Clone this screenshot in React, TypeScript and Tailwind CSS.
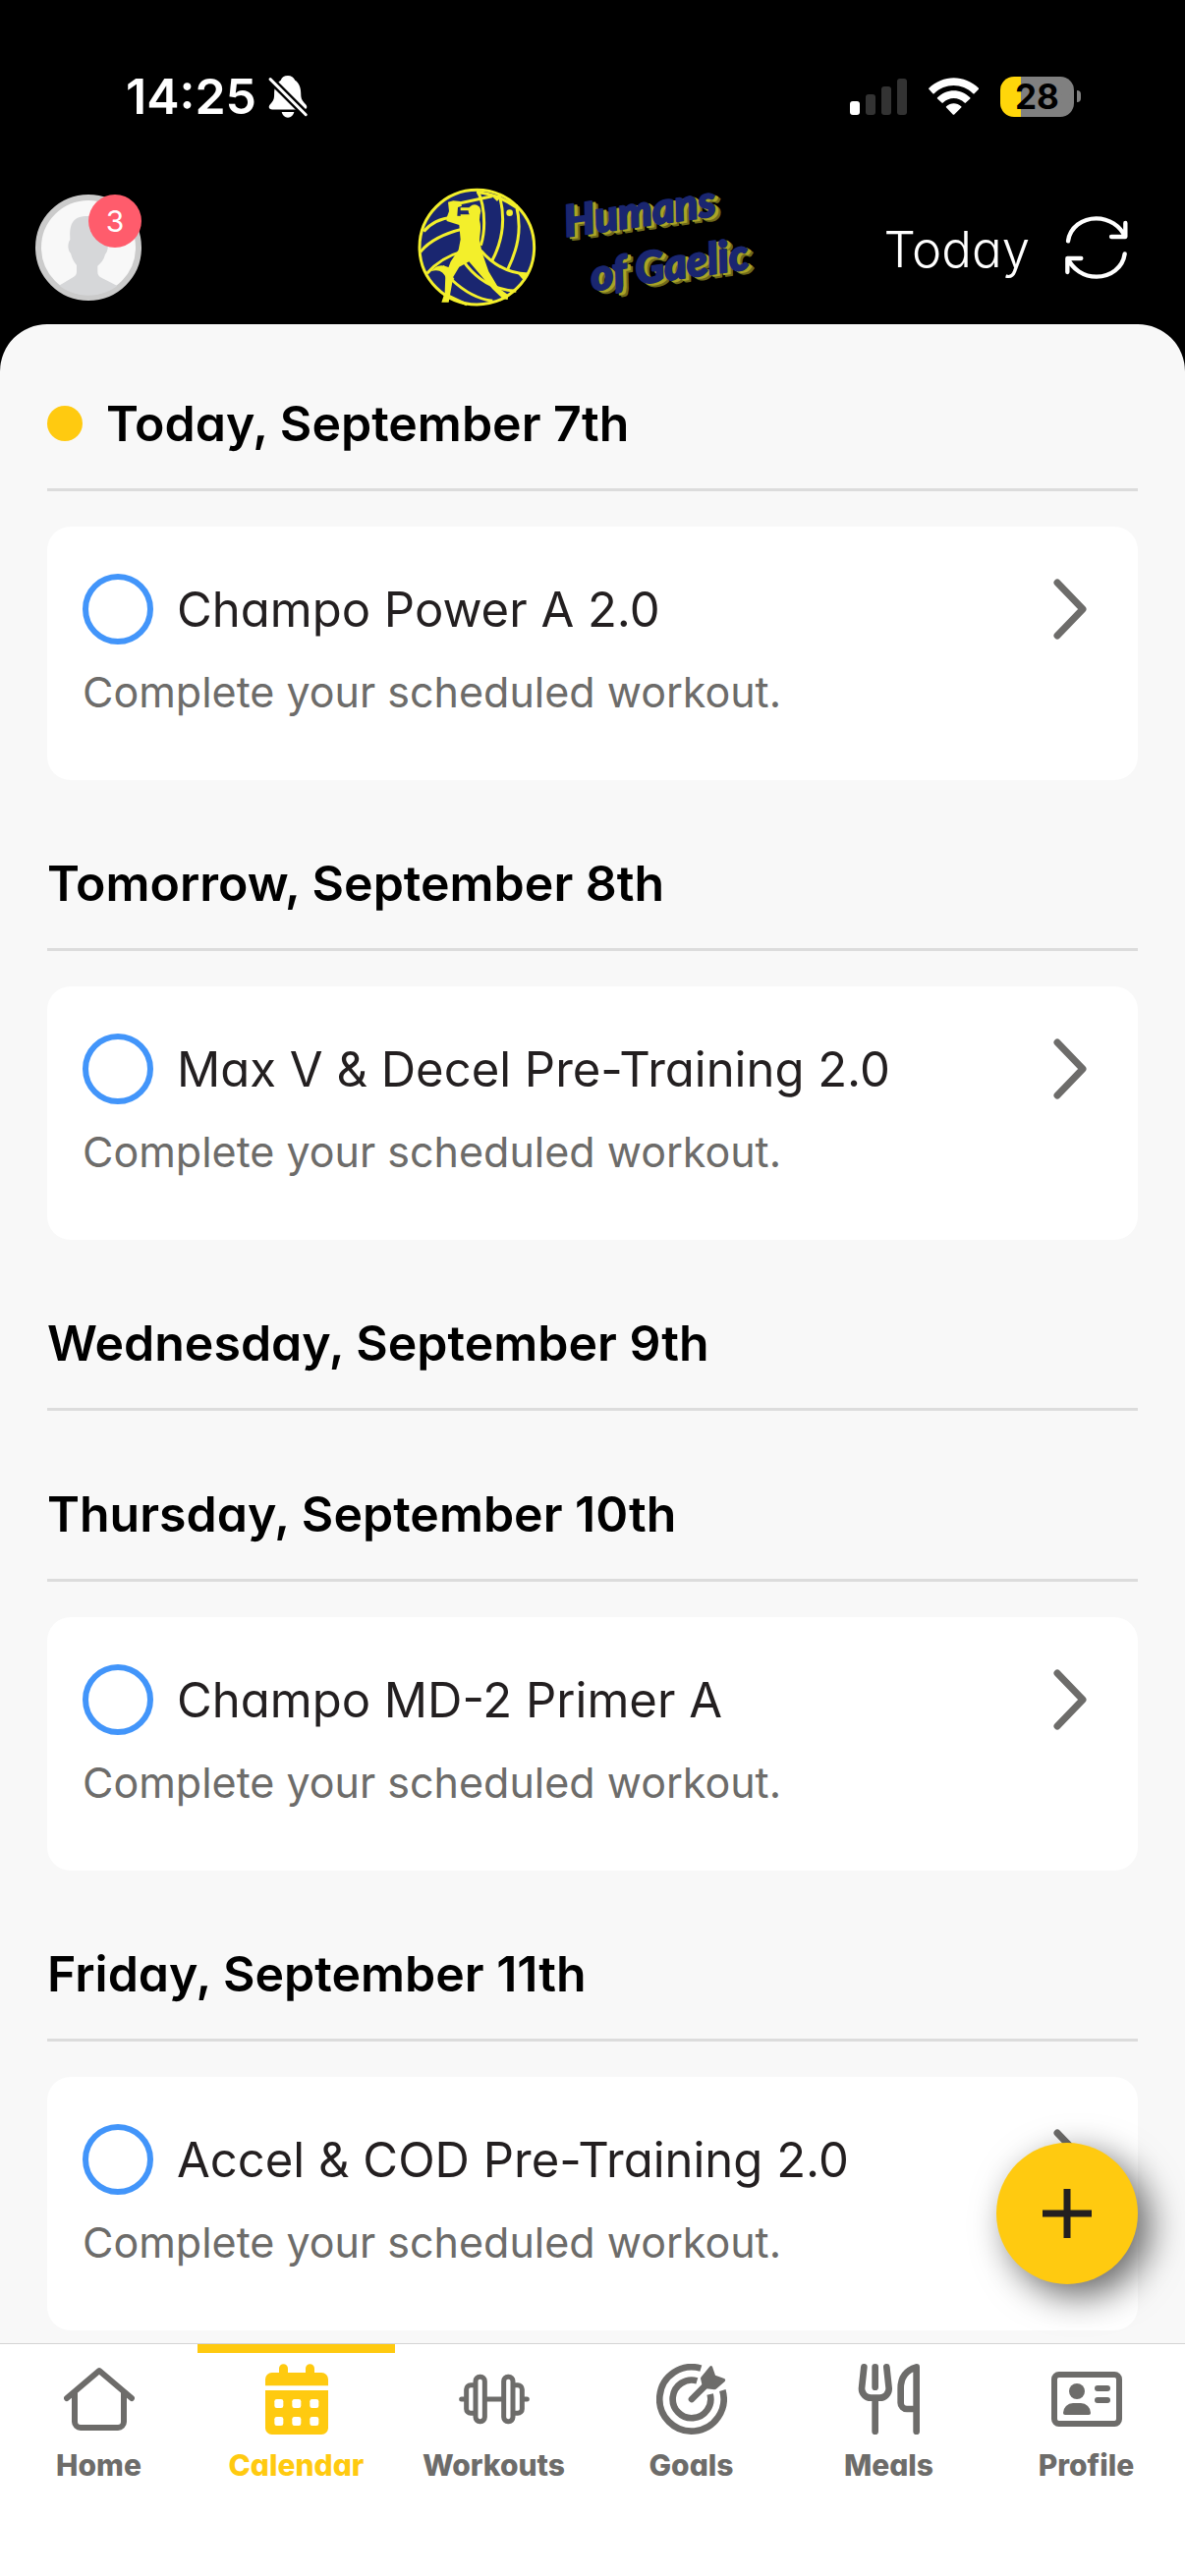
import { useState } from "react"
import type { ReactNode } from "react"

type Day = {
  label: string
  today?: boolean
  workout?: string
}

const days: Day[] = [
  { label: "Today, September 7th", today: true, workout: "Champo Power A 2.0" },
  { label: "Tomorrow, September 8th", workout: "Max V & Decel Pre-Training 2.0" },
  { label: "Wednesday, September 9th" },
  { label: "Thursday, September 10th", workout: "Champo MD-2 Primer A" },
  { label: "Friday, September 11th", workout: "Accel & COD Pre-Training 2.0" },
]

function StatusBar() {
  return (
    <div className="flex h-[60px] items-center justify-between pl-32 pr-[106px] text-white">
      <div className="flex items-center gap-3">
        <span className="text-[50px] leading-[60px] font-semibold">14:25</span>
        <svg viewBox="820 110 120 130" className="h-[43px] w-10" aria-hidden="true">
          <path
            fill="currentColor"
            d="M880 110c-12 0-19 6-22 14-15 10-20 24-20 41 0 17-2 21-12 33-8 9-4 16 6 16h96c10 0 14-7 6-16-10-12-14-16-14-33 0-17-5-33-18-41-4-8-12-14-22-14Z"
          />
          <path fill="currentColor" d="M861 222h38c-2 10-10 17-19 17s-17-7-19-17Z" />
          <path d="M820 115 942 237" stroke="#000" strokeWidth="23" />
          <path d="M826 121 935 230" stroke="currentColor" strokeWidth="9" strokeLinecap="round" />
        </svg>
      </div>

      <div className="flex items-center gap-[22px]">
        <svg viewBox="0 0 58 37" className="h-[37px] w-[58px]" aria-hidden="true">
          <rect x="0" y="23" width="10" height="14" rx="3" fill="#fff" />
          <rect x="16" y="16" width="10" height="21" rx="3" fill="#333" />
          <rect x="32" y="8" width="10" height="29" rx="3" fill="#333" />
          <rect x="48" y="0" width="10" height="37" rx="3" fill="#333" />
        </svg>
        <svg viewBox="417 116 152 113" className="h-[38px] w-[51px]" fill="currentColor" aria-hidden="true">
          <path d="M418 148c42-42 109-42 151 0 1 1 1 2 0 3l-13 13q-2 2-4 0c-33-32-85-32-118 0q-2 2-4 0l-12-13q-2-2 0-3Z" />
          <path d="M444 176c28-28 71-28 99 0q2 2 0 4l-13 12q-2 2-4 0c-18-18-47-18-65 0q-2 2-4 0l-13-12q-2-2 0-4Z" />
          <path d="M471 203c13-12 32-12 45 0q2 2 0 4l-20 20q-3 3-6 0l-19-20q-2-2 0-4Z" />
        </svg>
        <div className="flex items-center gap-[3px]">
          <div className="flex h-[41px] w-[75px] items-center justify-center rounded-[14px] bg-linear-to-r from-[#ffd60a] from-28% to-[#808080] to-28% text-[35px] leading-[41px] font-bold text-black">
            28
          </div>
          <div className="h-3 w-1 rounded-r-full bg-[#808080]" />
        </div>
      </div>
    </div>
  )
}

function Logo() {
  return (
    <svg viewBox="0 -16 356 156" className="h-[156px] w-[356px]" role="img" aria-label="Humans of Gaelic">
      {/* Ball with the hurler on top */}
      <g transform="translate(-25 -21) scale(.3333)">
        <circle cx="256" cy="248" r="175" fill="#1a2670" stroke="#f3ef2b" strokeWidth="9" />
        <g fill="none" stroke="#f3ef2b" strokeWidth="9">
          <path d="M94 200q30-38 90-44M84 262q38-48 130-70M104 328q40-48 110-68" />
          <path d="M206 131h34M206 152h34M258 76c16 30 20 60 20 98s-4 50-10 68" />
          <path d="M326 94c18 70 8 136-24 196M376 118c20 80 2 140-26 198" />
          <path d="M180 348q60 56 124 64M216 292q60 84 160 90M268 258q60 70 144 72" />
          <path d="M152 306q10 14 32 42M166 395l60 28M256 80q60 4 120 46M202 114l100-22" />
        </g>
        <path d="M116 322q18-24 44-16l18 6-14 34q-14-36-48-24M300 90l34-2-16 20ZM382 330l30 0-14 18Z" fill="#f3ef2b" />
        <circle cx="356" cy="143" r="10" fill="#f3ef2b" />
        <circle cx="249" cy="137" r="19" fill="#f3ef2b" />
        <path
          fill="#f3ef2b"
          d="m163 160 8-22-3-28 16-4 22 2 4 14-12 4-2 26 34 2 8-12 28 2-2 20c6 20 2 40 0 62l8 38 20 58 30 50 30 22-2 14-14-2-32-30-72-84-30 16-18 30-14 78h-22l10-30 2-52 16-42 24-36 6-32-4-44-38-12Z"
        />
      </g>
      <g
        fontFamily="Lato, sans-serif"
        fontWeight="900"
        fontStyle="italic"
        fontSize="44"
        strokeWidth="2"
        strokeLinejoin="round"
      >
        <g transform="translate(151 51) rotate(-8)">
          <text x="5" y="4" fill="#6e6b1c" stroke="#6e6b1c">Humans</text>
          <text x="3" y="2" fill="#a9a427" stroke="#a9a427">Humans</text>
          <text fill="#1a2670" stroke="#1a2670">Humans</text>
        </g>
        <g transform="translate(178 106) rotate(-8)">
          <text x="5" y="4" fill="#6e6b1c" stroke="#6e6b1c">of Gaelic</text>
          <text x="3" y="2" fill="#a9a427" stroke="#a9a427">of Gaelic</text>
          <text fill="#1a2670" stroke="#1a2670">of Gaelic</text>
        </g>
      </g>
    </svg>
  )
}

function Header() {
  return (
    <div className="grid grid-cols-[1fr_auto_1fr] items-center px-9 pt-[46px]">
      <button type="button" aria-label="Account, 3 notifications" className="relative size-[108px]">
        <svg viewBox="108 474 324 324" className="size-full" aria-hidden="true">
          <clipPath id="avatar">
            <circle cx="270" cy="636" r="146" />
          </clipPath>
          <circle cx="270" cy="636" r="153" fill="#f8f8f8" stroke="#cbcbcb" strokeWidth="18" />
          <path
            clipPath="url(#avatar)"
            fill="#d6d7d9"
            d="M214 612c-2-44 4-72 54-72s58 28 54 72c10 10 10 32-1 45-4 16-12 26-23 35v18q0 12 12 18l66 34v40H164v-40l60-36q10-6 10-16v-20c-10-12-14-22-18-36-10-10-10-32-2-42Z"
          />
        </svg>
        <span className="absolute top-0 right-0 flex size-[54px] items-center justify-center rounded-full bg-[#ff5c6c] text-[30px] leading-9 text-white">
          3
        </span>
      </button>
      <Logo />
      <div className="flex items-center justify-end gap-9 pr-[22px] text-white">
        <button type="button" className="pt-1 text-[51px] leading-[66px] font-light">Today</button>
        <button type="button" aria-label="Refresh">
          <svg
            viewBox="836 540 190 192"
            className="size-16"
            fill="none"
            stroke="currentColor"
            strokeWidth="13"
            strokeLinecap="round"
            strokeLinejoin="round"
            aria-hidden="true"
          >
            <path d="M844 616c6-42 44-69 86-69 40 0 73 23 88 56M1019 561v42h-43" />
            <path d="M1017 655c-6 43-44 70-86 70-40 0-73-23-88-56M842 711v-42h42" />
          </svg>
        </button>
      </div>
    </div>
  )
}

function WorkoutCard({ title }: { title: string }) {
  return (
    <article className="mt-9 rounded-3xl bg-white px-9 pt-12 pb-15">
      <div className="flex items-center">
        <label className="flex flex-1 items-center gap-6">
          <input
            type="checkbox"
            className="size-[72px] shrink-0 appearance-none rounded-full border-6 border-[#4295fa] checked:bg-[#4295fa]"
          />
          <span className="pt-0.5 text-[49px] leading-[66px] text-[#231f20]">{title}</span>
        </label>
        <button type="button" aria-label={`Open ${title}`} className="px-4">
          <svg
            viewBox="0 0 34 62"
            className="h-[62px] w-[34px]"
            fill="none"
            stroke="#6d6c6a"
            strokeWidth="7"
            strokeLinecap="round"
            strokeLinejoin="round"
            aria-hidden="true"
          >
            <path d="m4 4 26 27L4 58" />
          </svg>
        </button>
      </div>
      <p className="mt-[18px] text-[43px] leading-[60px] text-[#6d6c6a]">Complete your scheduled workout.</p>
    </article>
  )
}

const navItems: { label: string; icon: ReactNode; viewBox: string }[] = [
  {
    label: "Home",
    viewBox: "198 108 216 216",
    icon: (
      <path
        d="m207 213 99-84 99 84M231 196v89a18 18 0 0 0 18 18h114a18 18 0 0 0 18-18v-89"
        strokeWidth="18"
      />
    ),
  },
  {
    label: "Calendar",
    viewBox: "801 108 216 216",
    icon: (
      <g fill="currentColor" stroke="none">
        <path d="M855 135v-13a13 13 0 0 1 27 0v13h54v-13a13 13 0 0 1 27 0v13h22a20 20 0 0 1 20 20v20H813v-20a20 20 0 0 1 20-20Z" />
        <path d="M813 189h192v115a20 20 0 0 1-20 20H833a20 20 0 0 1-20-20Z" />
        <g fill="#fff">
          <rect x="841" y="216" width="27" height="27" rx="7" />
          <rect x="895" y="216" width="27" height="27" rx="7" />
          <rect x="949" y="216" width="27" height="27" rx="7" />
          <rect x="841" y="270" width="27" height="27" rx="7" />
          <rect x="895" y="270" width="27" height="27" rx="7" />
          <rect x="949" y="270" width="27" height="27" rx="7" />
        </g>
      </g>
    ),
  },
  {
    label: "Workouts",
    viewBox: "204 108 216 216",
    icon: (
      <g strokeWidth="15">
        <rect x="255" y="148" width="28" height="136" rx="13" />
        <rect x="341" y="148" width="28" height="136" rx="13" />
        <path d="M249 173h-9a13 13 0 0 0-13 13v60a13 13 0 0 0 13 13h9M375 173h9a13 13 0 0 1 13 13v60a13 13 0 0 1-13 13h-9" />
        <path d="M212 216h12M400 216h12M288 216h48" />
      </g>
    ),
  },
  {
    label: "Goals",
    viewBox: "807 108 216 216",
    icon: (
      <g strokeWidth="20">
        <path d="M943 122a98 98 0 1 0 66 67M931 160a58 58 0 1 0 40 41" strokeLinecap="butt" />
        <path d="m915 216 50-50" />
        <path
          d="m943 149 27-33q5-5 8 1l9 26 27 10q6 3 2 9l-25 22q-3 3-7 3l-30-4q-5 0-6-4l-6-26q0-2 1-4Z"
          fill="currentColor"
          stroke="none"
        />
      </g>
    ),
  },
  {
    label: "Meals",
    viewBox: "194 798 216 216",
    icon: (
      <path
        d="m225 808-7 65a28 28 0 0 0 28 29h27a28 28 0 0 0 28-29l-7-65M259 808v61M259 902v102M385 1004V808c-33 10-48 32-48 65v44a19 19 0 0 0 19 19h29"
        strokeWidth="20"
      />
    ),
  },
  {
    label: "Profile",
    viewBox: "795 798 216 216",
    icon: (
      <g strokeWidth="18">
        <rect x="804" y="831" width="198" height="150" rx="14" />
        <path d="M936 873h30M936 909h30" />
        <circle cx="873" cy="882" r="24" fill="currentColor" stroke="none" />
        <path d="M831 948a30 30 0 0 1 30-30h24a30 30 0 0 1 30 30q0 6-6 6h-72q-6 0-6-6Z" fill="currentColor" stroke="none" />
      </g>
    ),
  },
]

function BottomNav() {
  return (
    <nav className="grid grid-cols-6 border-t border-[#d4d4d4] bg-white pb-[93px]">
      {navItems.map((item) => {
        const active = item.label === "Calendar"
        return (
          <a
            key={item.label}
            href={`#${item.label.toLowerCase()}`}
            aria-current={active ? "page" : undefined}
            className={`flex flex-col items-center border-t-9 pt-[11px] ${
              active ? "border-[#ffca10] text-[#ffca10]" : "border-transparent text-[#6d6c6a]"
            }`}
          >
            <svg
              viewBox={item.viewBox}
              className="size-[72px]"
              fill="none"
              stroke="currentColor"
              strokeLinecap="round"
              strokeLinejoin="round"
              aria-hidden="true"
            >
              {item.icon}
            </svg>
            <span className="mt-[11px] text-[30px] leading-10 font-extrabold">{item.label}</span>
          </a>
        )
      })}
    </nav>
  )
}

export default function App() {
  const [sheetOpen, setSheetOpen] = useState(false)

  return (
    <div className="flex min-h-screen flex-col bg-black font-['Inter',sans-serif] [font-feature-settings:'cv11']">
      <header className="pt-[68px]">
        <StatusBar />
        <Header />
      </header>

      <div className="relative flex flex-1 flex-col">
        <main className="flex flex-1 flex-col gap-18 rounded-t-[48px] bg-[#f8f8f8] px-12 pt-17 pb-3">
          {days.map((day) => (
            <section key={day.label}>
              <h2 className="flex items-center gap-6 border-b-3 border-[#dcdcdc] pb-[33px] text-[50px] leading-[66px] font-semibold text-black">
                {day.today && <span className="size-9 rounded-full bg-[#ffca10]" />}
                {day.label}
              </h2>
              {day.workout && <WorkoutCard title={day.workout} />}
            </section>
          ))}
        </main>

        {/* Floating add button */}
        <button
          type="button"
          aria-label="Add"
          aria-expanded={sheetOpen}
          onClick={() => setSheetOpen(!sheetOpen)}
          className="absolute right-12 bottom-[60px] flex size-36 items-center justify-center rounded-full bg-[#ffca10] shadow-[12px_12px_36px_rgba(0,0,0,0.6)]"
        >
          <svg viewBox="0 0 50 50" className="size-[50px]" stroke="#231f20" strokeWidth="7" aria-hidden="true">
            <path d="M25 0v50M0 25h50" />
          </svg>
        </button>
      </div>

      <BottomNav />
    </div>
  )
}
